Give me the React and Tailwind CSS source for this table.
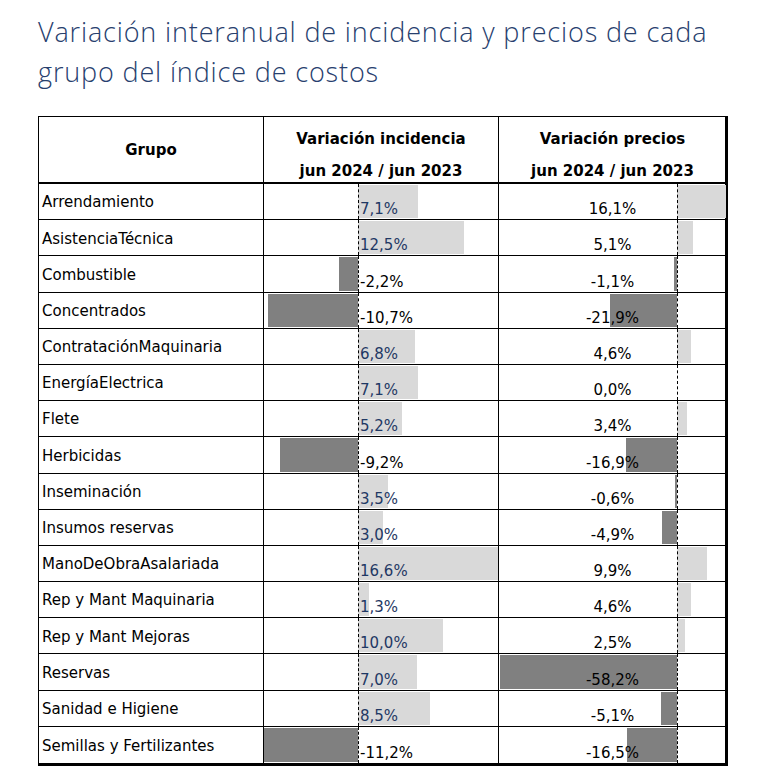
import React from "react";

const rows = [
  ["Arrendamiento", 7.1, 16.1],
  ["AsistenciaTécnica", 12.5, 5.1],
  ["Combustible", -2.2, -1.1],
  ["Concentrados", -10.7, -21.9],
  ["ContrataciónMaquinaria", 6.8, 4.6],
  ["EnergíaElectrica", 7.1, 0.0],
  ["Flete", 5.2, 3.4],
  ["Herbicidas", -9.2, -16.9],
  ["Inseminación", 3.5, -0.6],
  ["Insumos reservas", 3.0, -4.9],
  ["ManoDeObraAsalariada", 16.6, 9.9],
  ["Rep y Mant Maquinaria", 1.3, 4.6],
  ["Rep y Mant Mejoras", 10.0, 2.5],
  ["Reservas", 7.0, -58.2],
  ["Sanidad e Higiene", 8.5, -5.1],
  ["Semillas y Fertilizantes", -11.2, -16.5],
];

const fmt = (v) => v.toFixed(1).replace(".", ",") + "%";

// barra de la columna (eje en px desde la izquierda, px por cada 1%)
const BarCell = ({ value, axis, scale, centered, last }) => {
  const w = Math.abs(value) * scale;
  const left = value >= 0 ? axis : axis - w;
  const neg = value < 0;
  return (
    <div className={`relative h-full overflow-hidden ${last ? "" : "border-r border-black"}`}>
      {w > 0 && (
        <div
          className={`absolute top-[1px] bottom-[1px] ${neg ? "bg-[#808080]" : "bg-[#d9d9d9]"}`}
          style={{ left, width: w }}
        />
      )}
      <div
        className="absolute top-0 bottom-0 border-l border-dashed border-black"
        style={{ left: axis }}
      />
      {centered ? (
        <div className="absolute inset-x-0 bottom-[1px] text-center text-black leading-[18px]">
          {fmt(value)}
        </div>
      ) : (
        <div
          className={`absolute bottom-[1px] leading-[18px] ${neg ? "text-black" : "text-[#1f3864]"}`}
          style={{ left: axis + 2 }}
        >
          {fmt(value)}
        </div>
      )}
    </div>
  );
};

export default function App() {
  return (
    <div className="w-[769px] h-[779px] bg-white overflow-hidden">
      <h1
        className="pl-[38px] pt-[12px] text-[27px] leading-[40px] font-light tracking-[0.85px] text-[#27406e] whitespace-nowrap"
        style={{ fontFamily: "'Open Sans', Lato, sans-serif" }}
      >
        Variación interanual de incidencia y precios de cada
        <br />
        grupo del índice de costos
      </h1>
      <div
        className="ml-[38px] mt-[24px] w-[690px] border-l border-t border-black border-r-[3px] border-b-[3px] text-[15px] text-black"
        style={{ fontFamily: "'DejaVu Sans', Verdana, sans-serif" }}
      >
        <div className="grid grid-cols-[225px_235px_227px] h-[67px] border-b-2 border-black font-bold">
          <div className="flex items-center justify-center border-r border-black pt-[1px]">Grupo</div>
          <div className="flex flex-col items-center gap-[14px] border-r border-black pt-[13px] leading-[18px]">
            <span>Variación incidencia</span>
            <span>jun 2024 / jun 2023</span>
          </div>
          <div className="flex flex-col items-center gap-[14px] pt-[13px] leading-[18px]">
            <span>Variación precios</span>
            <span>jun 2024 / jun 2023</span>
          </div>
        </div>
        {rows.map(([name, inc, pre], i) => (
          <div
            key={name}
            className={`grid grid-cols-[225px_235px_227px] h-[36.2px] ${i < rows.length - 1 ? "border-b border-black" : ""}`}
          >
            <div className="flex items-center pl-[3px] pt-[2px] border-r border-black whitespace-nowrap">{name}</div>
            <BarCell value={inc} axis={94} scale={8.45} />
            <BarCell value={pre} axis={178} scale={3.04} centered last />
          </div>
        ))}
      </div>
    </div>
  );
}
